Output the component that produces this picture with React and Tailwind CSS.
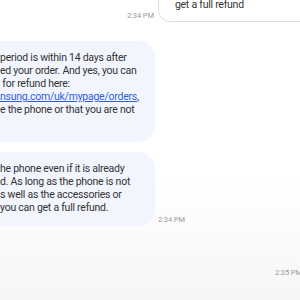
import React from "react";

const font = { fontFamily: "Roboto, 'Noto Sans', sans-serif" };

const Time = ({ children, className = "" }) => (
  <span className={`whitespace-nowrap text-[7.5px] leading-[10px] tracking-[-0.1px] text-[#9a9a9a] ${className}`}>
    {children}
  </span>
);

export default function App() {
  return (
    <div
      style={font}
      className="flex h-[300px] w-[300px] flex-col overflow-hidden bg-gradient-to-b from-white from-60% to-[#f6f6f6] text-[10.5px] leading-[13px] tracking-[-0.25px] text-[#333]"
    >
      {/* customer bubble, top cut off */}
      <div className="-mt-[3px] ml-[127px] flex items-end gap-[4px]">
        <Time className="mb-[1px]">2:34 PM</Time>
        <div className="w-[170px] shrink-0 rounded-bl-[12px] border border-[#dedede] bg-white pb-[10px] pl-[16px]">
          get a full refund
        </div>
      </div>

      {/* agent bubble 1 */}
      <div className="-ml-[20px] mt-[19px] w-[175px] rounded-[16px] bg-[#f2f5fd] pb-[26px] pl-[20px] pt-[10px] whitespace-pre">
        <div>period is within 14 days after</div>
        <div>ed your order. And yes, you can</div>
        <div> for refund here:</div>
        <div>
          <a href="#" className="text-[#2f5fd8] underline">
            nsung.com/uk/mypage/orders
          </a>
          ,
        </div>
        <div>e the phone or that you are not</div>
      </div>

      {/* agent bubble 2 */}
      <div className="mt-[10px] flex items-end gap-[3px]">
        <div className="-ml-[20px] w-[175px] rounded-[16px] bg-[#f2f5fd] pb-[12px] pl-[20px] pt-[10px] whitespace-pre">
          <div>he phone even if it is already</div>
          <div>d. As long as the phone is not</div>
          <div>s well as the accessories or</div>
          <div>you can get a full refund.</div>
        </div>
        <Time className="mb-[1px]">2:34 PM</Time>
      </div>

      <Time className="ml-[275px] mt-[42px]">2:35 PM</Time>
    </div>
  );
}
